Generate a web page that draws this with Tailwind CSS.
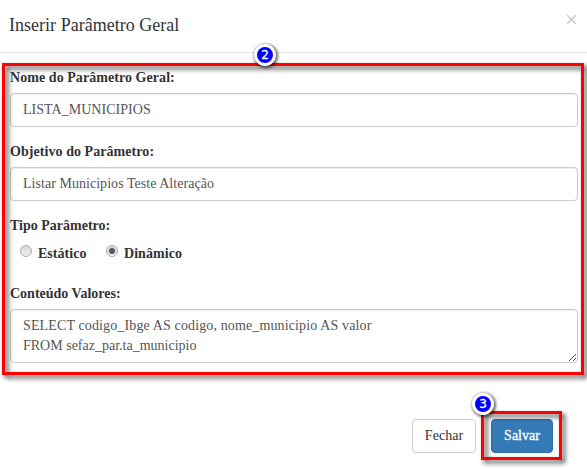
<!DOCTYPE html>
<html lang="pt-BR">
<head>
<meta charset="utf-8">
<title>Inserir Parâmetro Geral</title>
<script src="https://cdn.jsdelivr.net/npm/@tailwindcss/browser@4"></script>
</head>
<body class="relative h-[469px] w-[587px] overflow-hidden bg-white font-['Liberation_Serif',serif] text-[14px] leading-5 text-[#333]">
<header class="flex h-[53px] items-start justify-between border-b border-[#e5e5e5] pl-[9px] pr-[10px]">
  <h4 class="pt-[12px] text-[18px] leading-[26px]"><span class="tracking-[0.02px]">Inserir Parâmetro Geral</span></h4>
  <button aria-label="Fechar" class="mt-[14px]"><svg class="block size-[11px]" viewBox="0 0 11 11" fill="none" stroke="#c8c8c8" stroke-width="1.4"><path d="M1.2 1.2 9.8 9.8M9.8 1.2 1.2 9.8"/></svg></button>
</header>
<main class="pr-[9px] pl-[10px] pt-[15px]">
  <label class="block h-[25px] font-bold"><span class="tracking-[0.06px]">Nome do Parâmetro Geral:</span></label>
  <div class="h-[34px] rounded-[4px] border border-[#ccc] px-3 py-[6px] text-[#555] shadow-[inset_0_1px_1px_rgba(0,0,0,0.075)]"><span class="tracking-[0.03px]">LISTA_MUNICIPIOS</span></div>
  <label class="mt-[15px] block h-[25px] font-bold"><span class="tracking-[0.06px]">Objetivo do Parâmetro:</span></label>
  <div class="h-[34px] rounded-[4px] border border-[#ccc] px-3 py-[6px] text-[#555] shadow-[inset_0_1px_1px_rgba(0,0,0,0.075)]"><span class="tracking-[0.04px]">Listar Municipios Teste Alteração</span></div>
  <div class="mt-[15px] h-[25px] font-bold"><span>Tipo Parâmetro:</span></div>
  <div class="flex h-[28px] pl-[10px] font-bold">
    <label class="flex w-[86px] pt-[3px]"><span class="mt-[1px] mr-[6px] size-[12px] rounded-full border border-[#aaa] bg-linear-to-b from-[#d8d8d8] to-[#f0f0f0]"></span><span class="tracking-[0.03px]">Estático</span></label>
    <label class="flex pt-[3px]"><span class="mt-[1px] mr-[6px] flex size-[12px] items-center justify-center rounded-full border border-[#aaa] bg-linear-to-b from-[#d8d8d8] to-[#f0f0f0]"><span class="size-[6px] rounded-full bg-[#555]"></span></span><span class="tracking-[0.06px]">Dinâmico</span></label>
  </div>
  <label class="mt-[15px] block h-[25px] font-bold"><span>Conteúdo Valores:</span></label>
  <div class="relative h-[54px] rounded-[4px] border border-[#ccc] px-3 py-[6px] text-[#555] shadow-[inset_0_1px_1px_rgba(0,0,0,0.075)]">
    <p><span class="tracking-[0.13px]">SELECT codigo_Ibge AS codigo, nome_municipio AS valor</span></p>
    <p><span>FROM sefaz_par.ta_municipio</span></p>
    <svg class="absolute right-[1px] bottom-[1px] size-[7px]" viewBox="0 0 7 7" stroke="#555" stroke-width="1"><path d="M0 7 7 0M4 7 7 4"/></svg>
  </div>
</main>
<footer class="mt-[56px] flex justify-end gap-[15px] pr-[34px]">
  <button class="h-[34px] w-[64px] rounded-[4px] border border-[#ccc] bg-white"><span class="tracking-[0.03px]">Fechar</span></button>
  <button class="h-[34px] w-[62px] rounded-[4px] border border-[#2e6da4] bg-[#337ab7] text-white [-webkit-text-stroke:0.3px_white]"><span>Salvar</span></button>
</footer>
<div class="pointer-events-none absolute top-[63px] left-[2px] h-[312px] w-[582px] border-3 border-[#f00] drop-shadow-[3px_3px_2.5px_rgba(0,0,0,0.75)]"></div>
<div class="pointer-events-none absolute top-[411px] left-[481px] h-[49px] w-[81px] border-3 border-[#f00] drop-shadow-[3px_3px_2.5px_rgba(0,0,0,0.75)]"></div>
<div class="absolute top-[44px] left-[254px] flex size-[22px] items-center justify-center rounded-full border-3 border-white bg-[#00f] font-['DejaVu_Sans',sans-serif] text-[12px] leading-none text-white shadow-[1px_1px_3px_1px_rgba(0,0,0,0.6)] [-webkit-text-stroke:0.3px_white]">2</div>
<div class="absolute top-[393px] left-[472px] flex size-[22px] items-center justify-center rounded-full border-3 border-white bg-[#00f] font-['DejaVu_Sans',sans-serif] text-[12px] leading-none text-white shadow-[1px_1px_3px_1px_rgba(0,0,0,0.6)] [-webkit-text-stroke:0.3px_white]">3</div>
</body>
</html>
